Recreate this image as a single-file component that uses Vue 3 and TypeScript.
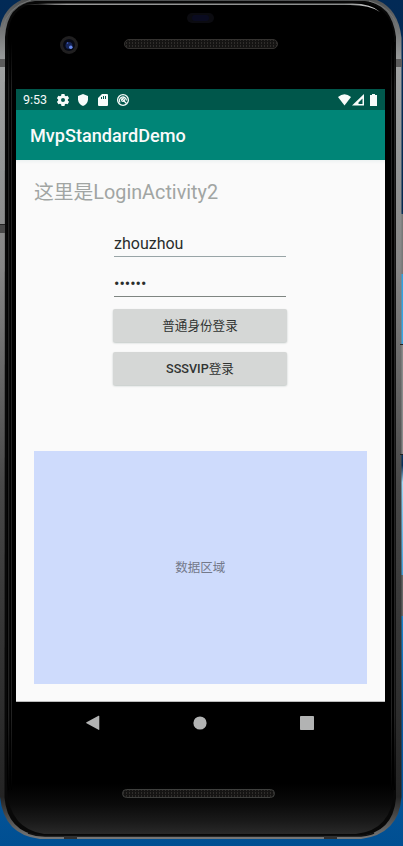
<script setup lang="ts">
const username = 'zhouzhou'
const password = '••••••'
const actions = [
  { id: 'normal', latin: '', han: '普通身份登录' },
  { id: 'vip', latin: 'SSSVIP', han: '登录' },
]
</script>

<template>
  <div class="desktop">
    <svg class="shell" width="403" height="846" viewBox="0 0 403 846" aria-hidden="true">
      <defs>
        <linearGradient id="wall" x1="0" y1="0" x2="0" y2="1">
          <stop offset="0" stop-color="#022a56" />
          <stop offset="0.25" stop-color="#04284f" />
          <stop offset="0.28" stop-color="#2a9ddd" />
          <stop offset="0.4" stop-color="#3aa8e4" />
          <stop offset="0.55" stop-color="#052d58" />
          <stop offset="0.57" stop-color="#9fd9f5" />
          <stop offset="0.73" stop-color="#1c85cc" />
          <stop offset="0.84" stop-color="#0a5ba3" />
          <stop offset="1" stop-color="#004f92" />
        </linearGradient>
        <linearGradient id="rim" x1="0" y1="0" x2="0" y2="1">
          <stop offset="0" stop-color="#4c4e4f" />
          <stop offset="0.08" stop-color="#a0a2a2" />
          <stop offset="0.2" stop-color="#929494" />
          <stop offset="0.32" stop-color="#858585" />
          <stop offset="0.45" stop-color="#666" />
          <stop offset="0.58" stop-color="#484848" />
          <stop offset="0.75" stop-color="#363636" />
          <stop offset="0.95" stop-color="#242424" />
          <stop offset="1" stop-color="#777" />
        </linearGradient>
        <linearGradient id="face" x1="0" y1="0" x2="0" y2="1">
          <stop offset="0" stop-color="#000" />
          <stop offset="0.94" stop-color="#000" />
          <stop offset="0.965" stop-color="#0b0b0b" />
          <stop offset="0.985" stop-color="#1a1a1a" />
          <stop offset="1" stop-color="#292929" />
        </linearGradient>
        <linearGradient id="edge" x1="0" y1="42" x2="0" y2="790" gradientUnits="userSpaceOnUse">
          <stop offset="0" stop-color="#000" />
          <stop offset="0.06" stop-color="#222" />
          <stop offset="0.9" stop-color="#222" />
          <stop offset="1" stop-color="#000" />
        </linearGradient>
        <linearGradient id="shine" x1="0" y1="0" x2="1" y2="0">
          <stop offset="0" stop-color="#333" />
          <stop offset="0.12" stop-color="#999" />
          <stop offset="0.9" stop-color="#8b8d8d" />
          <stop offset="1" stop-color="#ddd" />
        </linearGradient>
        <pattern id="mesh" width="3" height="3" patternUnits="userSpaceOnUse">
          <rect width="3" height="3" fill="#151413" />
          <rect width="1" height="2" fill="#2f2d2b" />
        </pattern>
      </defs>
      <rect width="403" height="846" fill="url(#wall)" />
      <rect x="401" y="214" width="2" height="60" fill="#777" />
      <rect x="401" y="345" width="2" height="109" fill="#8a8a8a" />
      <rect x="401" y="575" width="2" height="41" fill="#666" />
      <path d="M0 28Q4 6 26-2H371Q398 5 401.500 38V797Q399 834 361 839H40Q4 835 0 797Z" fill="url(#rim)" />
      <path d="M5 37Q7 4 35 1H365Q392 4 396 37V798Q393 833 359 836H41Q7 832 4.500 797Z" fill="#080808" />
      <path d="M7.500 37Q9 6 37 3H364Q392 7 394 38V790Q392 830 356 834H44Q10 829 7 790Z" fill="url(#face)" />
      <g fill="url(#edge)">
        <rect x="8" y="42" width="1.300" height="748" />
        <rect x="11" y="42" width="1" height="748" />
        <rect x="391" y="42" width="1" height="748" />
        <rect x="394" y="42" width="1.300" height="748" />
      </g>
      <path d="M2.500 30Q6 7 31 0M399 34Q395 8 369 1" stroke="#757777" stroke-width="1" fill="none" />
      <path d="M24 5Q36 3 55 3.500H350Q371 3 380 12Q370 5 350 5H55Q37 4 24 5Z" fill="url(#shine)" />
      <path d="M40 838H361" stroke="#777" stroke-width="1.500" />
      <path d="M28 833Q36 836 45 836H355Q368 836 374 833" stroke="#111" stroke-width="1.500" fill="none" />
      <rect x="64" y="836" width="13" height="3" fill="#303030" />
      <rect x="324" y="836" width="13" height="3" fill="#303030" />
      <path d="M0 59H5V67H0ZM396 59H402V67H396Z" fill="#5c5c5c" />
      <path d="M0 224.500H5V233H0Z" fill="#484848" />
      <path d="M0 224.500H5M400 344.500H403M400 454.500H403" stroke="#222" />
      <rect x="187" y="13" width="27" height="10" rx="5" fill="#0b0b10" />
      <rect x="192" y="15" width="17" height="6" rx="3" fill="#0a0b20" />
      <circle cx="69" cy="45" r="9" fill="#201f20" />
      <circle cx="69" cy="45" r="6" fill="#070914" />
      <circle cx="69" cy="45.500" r="3.500" fill="#162557" />
      <circle cx="70.800" cy="47.200" r="1.800" fill="#6688ed" />
      <circle cx="67.500" cy="43" r="0.800" fill="#4865ce" />
      <rect x="124.500" y="39.500" width="153" height="9" rx="4.500" fill="url(#mesh)" stroke="#343230" />
      <rect x="122.500" y="789.500" width="152" height="8" rx="4" fill="url(#mesh)" stroke="#3e3f3d" />
    </svg>

    <main class="screen">
      <header class="status">
        <span class="clock">9:53</span>
        <svg class="notices" width="76" height="14" viewBox="0 0 76 14" fill="#f7fbfa">
          <path fill-rule="evenodd" d="M5.500 1h3l.4 1.700 1.100.6 1.600-.6 1.500 2.500-1.200 1.100v1.400l1.200 1.100-1.500 2.500-1.600-.6-1.100.6-.4 1.700h-3l-.4-1.700-1.100-.6-1.600.6L.9 8.800l1.200-1.100V6.300L.9 5.200l1.500-2.500 1.600.6 1.100-.6ZM7 5a2 2 0 1 0 0 4a2 2 0 1 0 0-4Z" />
          <path d="M27 1L32 3V6.700Q31.500 11.200 27 13Q22.500 11.200 22 6.700V3Z" />
          <path fill-rule="evenodd" d="M46 1H51Q52 1 52 2V12Q52 13 51 13H43Q42 13 42 12V5ZM45 4V6H46V4ZM47 3V6H48V3ZM49 3V6H50V3Z" />
          <g fill="none" stroke="#f7fbfa">
            <circle cx="67" cy="7" r="5.400" stroke-width="1.300" />
            <path d="M70.500 10.500L65.600 5.600M64 9.500A3.500 3.500 0 1 1 70.400 7.600" stroke-width="1.300" />
            <circle cx="67" cy="7" r="1.500" stroke-width="1.100" />
          </g>
        </svg>
        <svg class="signals" width="41" height="14" viewBox="0 0 41 14" fill="#f7fbfa">
          <path d="M0 4Q6.500-1.500 13 4L6.500 12.500Z" />
          <path fill-rule="evenodd" d="M14 12.500L26 1V12.500ZM20.500 11H24.500V5.500L20.500 9.500Z" />
          <path d="M34 1H37V2H39V13H32V2H34Z" />
        </svg>
      </header>
      <div class="appbar">MvpStandardDemo</div>
      <section class="content">
        <h1>这里是LoginActivity2</h1>
        <form class="login" @submit.prevent>
          <div class="field">{{ username }}</div>
          <div class="field secret">{{ password }}</div>
          <button v-for="a in actions" :key="a.id" type="button"><b v-if="a.latin">{{ a.latin }}</b>{{ a.han }}</button>
        </form>
        <div class="data">数据区域</div>
      </section>
      <nav class="nav">
        <svg width="14" height="16" viewBox="0 0 14 16"><path d="M0.500 7.300L12.500.8Q13.300.5 13.300 1.300V14.500Q13.300 15.300 12.500 14.800L.5 8.300Q-.2 7.800.5 7.300Z" fill="#b2b3b3" /></svg>
        <svg width="14" height="14" viewBox="0 0 14 14"><circle cx="7" cy="7" r="6.600" fill="#b2b3b3" /></svg>
        <svg width="14" height="14" viewBox="0 0 14 14"><rect width="14" height="14" rx="0.800" fill="#b2b3b3" /></svg>
      </nav>
    </main>
  </div>
</template>

<style>
body {
  margin: 0;
  overflow: hidden;
}
</style>

<style scoped>
.desktop {
  display: grid;
  width: 403px;
  height: 846px;
  overflow: hidden;
  font-family: Roboto, "Noto Sans CJK SC", sans-serif;
}
.shell,
.screen {
  grid-area: 1 / 1;
}
.shell {
  display: block;
}
.screen {
  z-index: 1;
  display: flex;
  flex-direction: column;
  width: 369px;
  height: 655px;
  margin: 89px 0 0 16px;
}
.status {
  display: flex;
  align-items: center;
  box-sizing: border-box;
  height: 21px;
  padding: 0 6px 0 7px;
  background: #00574b;
  color: #f7fbfa;
}
.clock {
  width: 33px;
  font-size: 12.5px;
  line-height: 21px;
}
.signals {
  margin-left: auto;
}
.appbar {
  height: 50px;
  padding-left: 14px;
  background: #008577;
  color: #fafafa;
  font-size: 18.1px;
  font-weight: 500;
  line-height: 51px;
}
.content {
  display: flex;
  flex-direction: column;
  box-sizing: border-box;
  height: 542px;
  padding: 20px 18.5px 17.5px 18px;
  border-bottom: 1px solid #bbb;
  background: linear-gradient(#edf2f2, #fafafa 4px);
}
h1 {
  margin: 0;
  height: 26px;
  color: #a1a5a3;
  font-size: 19.8px;
  font-weight: 400;
  line-height: 26px;
  white-space: nowrap;
}
.login {
  display: flex;
  flex-direction: column;
  width: 174px;
  margin: 25px 0 0 79px;
}
.field {
  box-sizing: border-box;
  height: 26px;
  margin: 0 1px;
  border-bottom: 1px solid #98a4a6;
  color: #292d2c;
  font-size: 16px;
  line-height: 26px;
}
.secret {
  height: 40px;
  margin-bottom: 12px;
  border-bottom-color: #7e8581;
  line-height: 53px;
}
button {
  height: 33px;
  margin: 0 0 10px;
  padding: 0;
  border: 0;
  border-radius: 2px;
  background: #d5d7d6;
  box-shadow: 0 1px 2px #bfc6c4;
  color: #303332;
  font-family: inherit;
  font-size: 12.6px;
  font-weight: 400;
  line-height: 33px;
}
button b {
  font-weight: 500;
}
.data {
  height: 232.5px;
  margin-top: auto;
  background: #cedbfc;
  color: #74798a;
  font-size: 12.5px;
  line-height: 233px;
  text-align: center;
}
.nav {
  display: flex;
  align-items: center;
  justify-content: space-between;
  height: 42px;
  padding: 0 71px 0 70px;
}
</style>
